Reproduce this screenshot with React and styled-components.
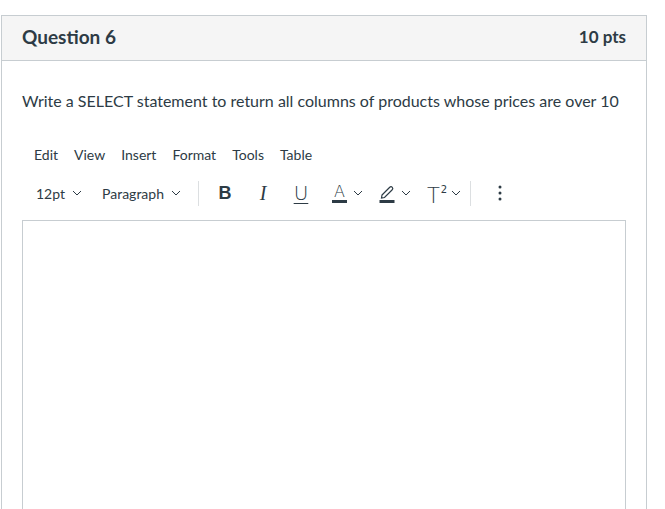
import React from 'react';
import styled, { createGlobalStyle } from 'styled-components';

const GlobalStyle = createGlobalStyle`
  html, body {
    margin: 0;
    padding: 0;
    background: #fff;
    font-family: Lato, "Open Sans", sans-serif;
    color: #2d3b45;
    overflow: hidden;
  }
`;

const Panel = styled.section`
  margin: 15px 0 0 1px;
  width: 646px;
  height: 494px;
  box-sizing: border-box;
  border: 1px solid #c7cdd1;
  border-bottom: none;
  display: flex;
  flex-direction: column;
`;

const Header = styled.header`
  height: 45px;
  box-sizing: border-box;
  padding: 0 20px 4px;
  flex-shrink: 0;
  background: #f5f5f5;
  border-bottom: 1px solid #c7cdd1;
  display: flex;
  align-items: center;
  justify-content: space-between;
`;

const Title = styled.h2`
  margin: 0;
  font-size: 19px;
  font-weight: 700;
  color: #2d3b45;
`;

const Points = styled.span`
  font-size: 17px;
  font-weight: 700;
  color: #2d3b45;
`;

const Body = styled.div`
  flex: 1;
  padding: 28px 20px 0;
  display: flex;
  flex-direction: column;
  min-height: 0;
`;

const Prompt = styled.p`
  margin: 0;
  font-size: 16px;
  line-height: 24px;
  white-space: nowrap;
`;

const MenuBar = styled.nav`
  margin-top: 27px;
  height: 28px;
  display: flex;
  align-items: center;
  padding-left: 4px;
`;

const MenuItem = styled.span`
  font-size: 14px;
  padding: 0 8px;
  color: #2d3b45;
`;

const Toolbar = styled.div`
  margin-top: 8px;
  height: 34px;
  display: flex;
  align-items: center;
  padding-left: 4px;
`;

const Dropdown = styled.span`
  display: flex;
  align-items: center;
  gap: 7px;
  font-size: 14px;
  padding: 0 10px;
  color: #2d3b45;
`;

const Separator = styled.span`
  width: 1px;
  height: 25px;
  background: #dcdfe1;
  margin: 0 ${(p) => p.$right}px 0 ${(p) => p.$left}px;
`;

const Btn = styled.span`
  display: flex;
  align-items: center;
  justify-content: center;
  width: 36px;
  height: 30px;
  margin-right: 2px;
  color: #2d3b45;
`;

const SplitBtn = styled.span`
  display: flex;
  align-items: center;
  gap: ${(p) => p.$gap || 6}px;
  height: 30px;
  padding: 0 3px 0 11px;
  margin-right: 2px;
  color: #2d3b45;
`;

const BoldGlyph = styled.span`
  font-family: "Liberation Sans", Arial, sans-serif;
  font-weight: 700;
  font-size: 18px;
`;

const ItalicGlyph = styled.span`
  font-family: "Liberation Serif", serif;
  font-style: italic;
  font-size: 20px;
`;

const UnderGlyph = styled.span`
  font-family: "DejaVu Sans", sans-serif;
  font-weight: 200;
  font-size: 20px;
  line-height: 20px;
  text-decoration: underline;
  text-underline-offset: 3px;
  text-decoration-thickness: 1px;
`;

const ColorGlyph = styled.span`
  display: flex;
  flex-direction: column;
  align-items: center;
  width: 15px;
  font-family: "DejaVu Sans", sans-serif;
  font-weight: 200;
  font-size: 16px;
  line-height: 15px;
  &::after {
    content: '';
    display: block;
    width: 15px;
    height: 3px;
    margin-top: 1px;
    background: #2d3b45;
  }
`;

const SupGlyph = styled.span`
  width: 19px;
  font-family: "DejaVu Sans", sans-serif;
  font-size: 21px;
  font-weight: 200;
  line-height: 22px;
  sup {
    font-size: 10px;
    font-weight: 400;
    vertical-align: 10px;
    margin-left: 1px;
  }
`;

const KebabBtn = styled.span`
  display: flex;
  align-items: center;
  justify-content: center;
  width: 34px;
  height: 30px;
`;

const Editor = styled.div`
  margin-top: 10px;
  flex: 1;
  border: 1px solid #c7cdd1;
  border-bottom: none;
`;

const Chevron = () => (
  <svg width="10" height="6" viewBox="0 0 10 6">
    <polyline points="1,1 5,5 9,1" fill="none" stroke="#2d3b45" strokeWidth="1" />
  </svg>
);

const Highlighter = () => (
  <svg width="16" height="20" viewBox="0 0 16 20">
    <path d="M3 12 L10.5 4.5 Q12 3 13.3 4.3 Q14.5 5.6 13 7 L5.5 14.5 L2.5 15 Z" fill="none" stroke="#2d3b45" strokeWidth="1.2" />
    <rect x="0.5" y="17" width="15" height="3" fill="#2d3b45" />
  </svg>
);

const Kebab = () => (
  <svg width="4" height="16" viewBox="0 0 4 16">
    <circle cx="2" cy="2" r="1.5" fill="#2d3b45" />
    <circle cx="2" cy="8" r="1.5" fill="#2d3b45" />
    <circle cx="2" cy="14" r="1.5" fill="#2d3b45" />
  </svg>
);

const menus = ['Edit', 'View', 'Insert', 'Format', 'Tools', 'Table'];

export default function App() {
  return (
    <>
      <GlobalStyle />
      <Panel>
        <Header>
          <Title>Question 6</Title>
          <Points>10 pts</Points>
        </Header>
        <Body>
          <Prompt>Write a SELECT statement to return all columns of products whose prices are over 10</Prompt>
          <MenuBar>
            {menus.map((m) => (
              <MenuItem key={m}>{m}</MenuItem>
            ))}
          </MenuBar>
          <Toolbar>
            <Dropdown>12pt <Chevron /></Dropdown>
            <Dropdown>Paragraph <Chevron /></Dropdown>
            <Separator $left={7} $right={8} />
            <Btn><BoldGlyph>B</BoldGlyph></Btn>
            <Btn><ItalicGlyph>I</ItalicGlyph></Btn>
            <Btn><UnderGlyph>U</UnderGlyph></Btn>
            <SplitBtn><ColorGlyph>A</ColorGlyph><Chevron /></SplitBtn>
            <SplitBtn><Highlighter /><Chevron /></SplitBtn>
            <SplitBtn $gap={5}><SupGlyph>T<sup>2</sup></SupGlyph><Chevron /></SplitBtn>
            <Separator $left={4} $right={12} />
            <KebabBtn><Kebab /></KebabBtn>
          </Toolbar>
          <Editor />
        </Body>
      </Panel>
    </>
  );
}
